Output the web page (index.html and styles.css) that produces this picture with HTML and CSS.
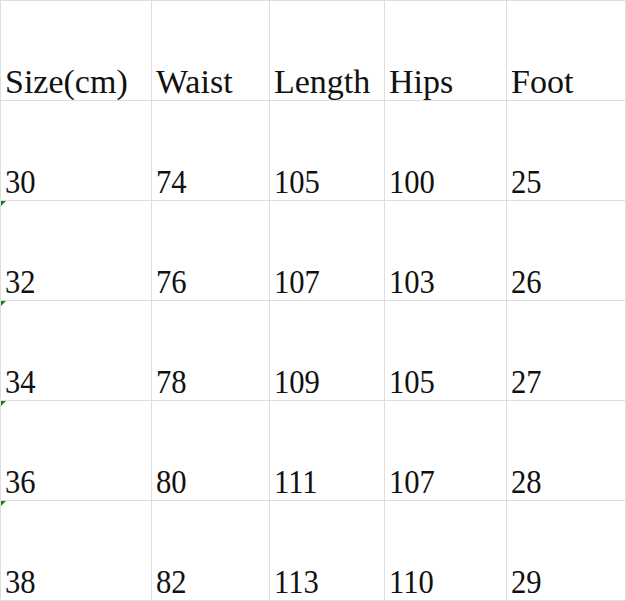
FILE: index.html
```html
<!DOCTYPE html>
<html>
<head>
<meta charset="utf-8">
<link rel="stylesheet" href="styles.css">
</head>
<body>
<div class="sheet">
  <div class="cell">Size(cm)</div>
  <div class="cell">Waist</div>
  <div class="cell">Length</div>
  <div class="cell">Hips</div>
  <div class="cell">Foot</div>

  <div class="cell"><span class="num">30</span></div>
  <div class="cell"><span class="num">74</span></div>
  <div class="cell"><span class="num">105</span></div>
  <div class="cell"><span class="num">100</span></div>
  <div class="cell"><span class="num">25</span></div>

  <div class="cell flag"><span class="num">32</span></div>
  <div class="cell"><span class="num">76</span></div>
  <div class="cell"><span class="num">107</span></div>
  <div class="cell"><span class="num">103</span></div>
  <div class="cell"><span class="num">26</span></div>

  <div class="cell flag"><span class="num">34</span></div>
  <div class="cell"><span class="num">78</span></div>
  <div class="cell"><span class="num">109</span></div>
  <div class="cell"><span class="num">105</span></div>
  <div class="cell"><span class="num">27</span></div>

  <div class="cell flag"><span class="num">36</span></div>
  <div class="cell"><span class="num">80</span></div>
  <div class="cell"><span class="num">111</span></div>
  <div class="cell"><span class="num">107</span></div>
  <div class="cell"><span class="num">28</span></div>

  <div class="cell flag"><span class="num">38</span></div>
  <div class="cell"><span class="num">82</span></div>
  <div class="cell"><span class="num">113</span></div>
  <div class="cell"><span class="num">110</span></div>
  <div class="cell"><span class="num">29</span></div>
</div>
</body>
</html>
```

FILE: styles.css
```css
html, body {
  margin: 0;
  padding: 0;
  background: #ffffff;
}

.sheet {
  display: grid;
  grid-template-columns: 151px 118px 115px 122px 119px;
  grid-auto-rows: 100px;
  width: 626px;
  box-sizing: border-box;
  border-top: 1px solid #dedede;
  border-left: 1px solid #dedede;
  font-family: "Liberation Serif", "Times New Roman", serif;
  font-size: 34px;
  line-height: 34px;
  color: #111111;
}

.cell {
  position: relative;
  display: flex;
  align-items: flex-end;
  box-sizing: border-box;
  border-right: 1px solid #dedede;
  border-bottom: 1px solid #dedede;
  padding: 0 0 1px 4px;
  white-space: nowrap;
}

.num {
  display: inline-block;
  transform: scaleX(0.9);
  transform-origin: left bottom;
}

.flag::before {
  content: "";
  position: absolute;
  left: 0;
  top: 0;
  width: 0;
  height: 0;
  border-top: 5px solid #1a7f1a;
  border-right: 5px solid transparent;
}
```
